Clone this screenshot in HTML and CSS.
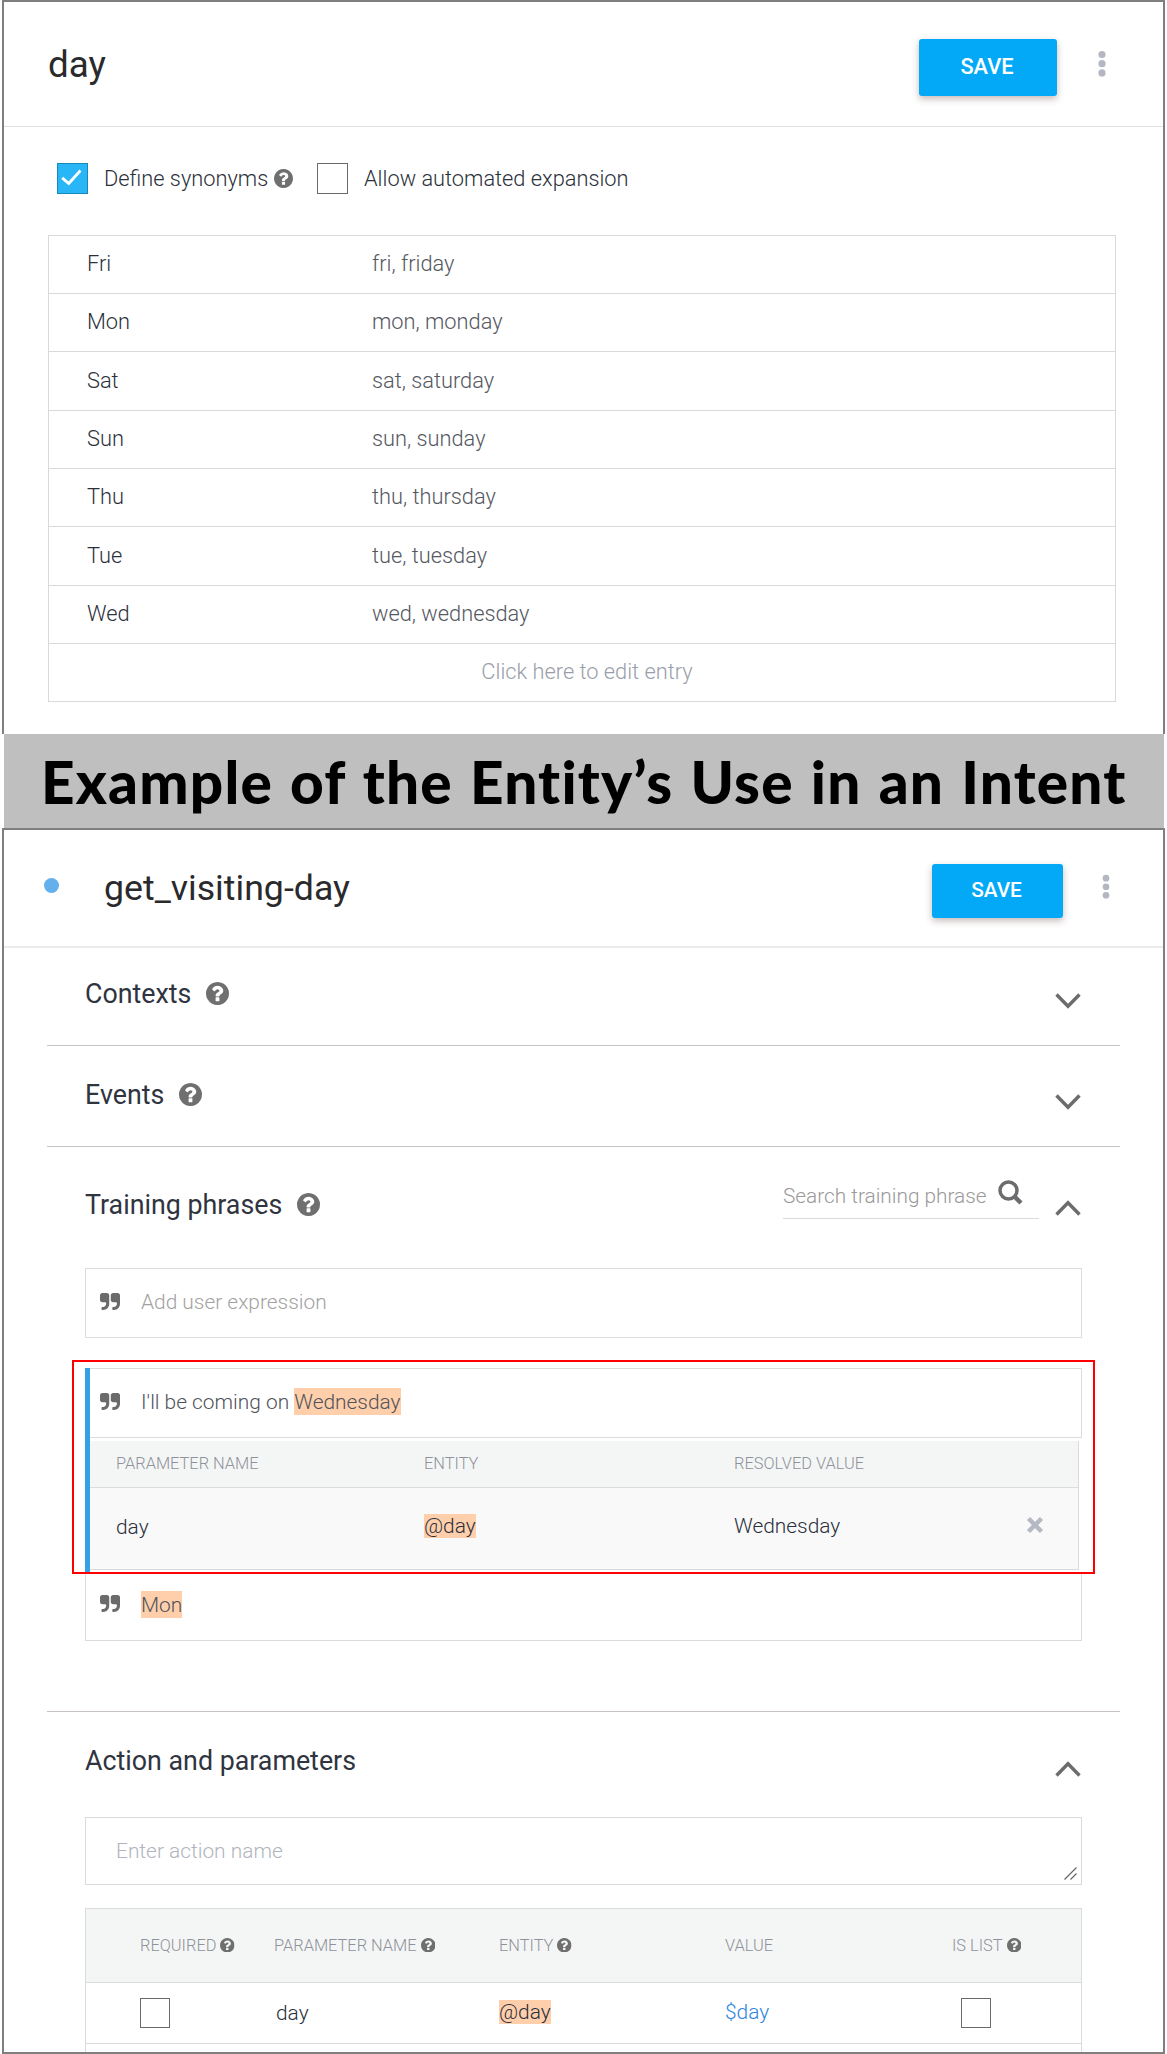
FILE: index.html
```html
<!DOCTYPE html>
<html lang="en">
<head>
<meta charset="utf-8">
<title>Entity and intent</title>
<link rel="stylesheet" href="styles.css">
</head>
<body>
<svg class="sprite" aria-hidden="true">
  <symbol id="help" viewBox="128 128 1536 1536"><path d="M1024 1376v-192q0-14-9-23t-23-9h-192q-14 0-23 9t-9 23v192q0 14 9 23t23 9h192q14 0 23-9t9-23zm256-672q0-88-55.500-163t-138.500-116-170-41q-243 0-371 213-15 24 8 42l132 100q7 6 19 6 16 0 25-12 53-68 86-92 34-24 86-24 48 0 85.500 26t37.500 59q0 38-20 61t-68 45q-63 28-115.500 86.500t-52.500 125.500v36q0 14 9 23t23 9h192q14 0 23-9t9-23q0-19 21.500-49.500t54.500-49.500q32-18 49-28.500t46-35 44.500-48 28-60.500 12.500-81zm384 192q0 209-103 385.500t-279.500 279.500-385.500 103-385.500-103-279.500-279.500-103-385.500 103-385.500 279.500-279.500 385.500-103 385.500 103 279.500 279.500 103 385.500z"/></symbol>
  <symbol id="quote" viewBox="64 128 1664 1408" preserveAspectRatio="none"><path d="M832 320v704q0 104-40.500 198.500t-109.500 163.500-163.500 109.500-198.500 40.500h-64q-26 0-45-19t-19-45v-128q0-26 19-45t45-19h64q106 0 181-75t75-181v-32q0-40-28-68t-68-28h-224q-80 0-136-56t-56-136v-384q0-80 56-136t136-56h384q80 0 136 56t56 136zm896 0v704q0 104-40.500 198.500t-109.500 163.500-163.500 109.500-198.500 40.500h-64q-26 0-45-19t-19-45v-128q0-26 19-45t45-19h64q106 0 181-75t75-181v-32q0-40-28-68t-68-28h-224q-80 0-136-56t-56-136v-384q0-80 56-136t136-56h384q80 0 136 56t56 136z"/></symbol>
  <symbol id="dots" viewBox="0 0 8 28"><circle cx="4" cy="4.500" r="3.600"/><circle cx="4" cy="13.700" r="3.600"/><circle cx="4" cy="22.900" r="3.600"/></symbol>
  <symbol id="chevron" viewBox="0 0 26 16"><path d="M1.500 1.500 13 13.300 24.500 1.500" fill="none" stroke="#6c6c6f" stroke-width="3.400"/></symbol>
</svg>

<section class="panel entity">
  <header class="entity-head">
    <h1 class="title">day</h1>
    <button class="save">SAVE</button>
    <svg class="dots"><use href="#dots"/></svg>
  </header>
  <div class="options">
    <span class="check checked"><svg viewBox="0 0 31 31"><path d="M4.500 14.800 11.500 20.800 24 7" fill="none" stroke="#fff" stroke-width="3"/></svg></span>
    <span class="option-label first">Define synonyms</span>
    <svg class="help help-md"><use href="#help"/></svg>
    <span class="check second"></span>
    <span class="option-label">Allow automated expansion</span>
  </div>
  <div class="entries">
    <div class="entry"><span>Fri</span><span class="syn">fri, friday</span></div>
    <div class="entry"><span>Mon</span><span class="syn">mon, monday</span></div>
    <div class="entry tall"><span>Sat</span><span class="syn">sat, saturday</span></div>
    <div class="entry"><span>Sun</span><span class="syn">sun, sunday</span></div>
    <div class="entry"><span>Thu</span><span class="syn">thu, thursday</span></div>
    <div class="entry tall"><span>Tue</span><span class="syn">tue, tuesday</span></div>
    <div class="entry"><span>Wed</span><span class="syn">wed, wednesday</span></div>
    <div class="entry-add">Click here to edit entry</div>
  </div>
</section>

<div class="banner"><span class="banner-text">Example of the Entity’s Use in an Intent</span></div>

<section class="panel intent">
  <header class="intent-head">
    <span class="status"></span>
    <h1 class="title small">get_visiting-day</h1>
    <button class="save small">SAVE</button>
    <svg class="dots small"><use href="#dots"/></svg>
  </header>

  <div class="section contexts">
    <h2>Contexts</h2><svg class="help help-lg"><use href="#help"/></svg>
    <svg class="chevron"><use href="#chevron"/></svg>
  </div>
  <div class="section events">
    <h2>Events</h2><svg class="help help-lg"><use href="#help"/></svg>
    <svg class="chevron"><use href="#chevron"/></svg>
  </div>

  <div class="section-block training">
    <div class="training-head">
      <h2>Training phrases</h2><svg class="help help-lg"><use href="#help"/></svg>
      <div class="search">
        <span class="search-text">Search training phrase</span>
        <svg class="search-icon" viewBox="0 0 25 25"><circle cx="10.500" cy="10.500" r="8.500"/><path d="M16.500 16.500 23 23"/></svg>
      </div>
      <svg class="chevron up"><use href="#chevron"/></svg>
    </div>
    <div class="phrase add"><svg class="quote"><use href="#quote"/></svg><span>Add user expression</span></div>
    <div class="phrase-group">
      <div class="highlight"></div>
      <div class="selected">
        <div class="phrase"><svg class="quote"><use href="#quote"/></svg><span>I'll be coming on <mark>Wednesday</mark></span></div>
        <div class="params">
          <div class="params-row params-head"><span>PARAMETER NAME</span><span>ENTITY</span><span>RESOLVED VALUE</span></div>
          <div class="params-row params-body">
            <span class="pname">day</span><span><mark class="tight">@day</mark></span><span>Wednesday</span>
            <svg class="remove" viewBox="0 0 18 18"><path d="M2.500 2.500 15.500 15.500M15.500 2.500 2.500 15.500"/></svg>
          </div>
        </div>
      </div>
      <div class="phrase last"><svg class="quote"><use href="#quote"/></svg><span><mark>Mon</mark></span></div>
    </div>
  </div>

  <div class="section-block action">
    <div class="action-head">
      <h2>Action and parameters</h2>
      <svg class="chevron up"><use href="#chevron"/></svg>
    </div>
    <div class="action-name"><span>Enter action name</span>
      <svg class="grip" viewBox="0 0 13 13"><path d="M.5 12.500 12.500.5M6.500 12.500 12.500 6.500"/></svg>
    </div>
    <div class="action-table">
      <div class="action-row action-cols">
        <span>REQUIRED<svg class="help help-sm"><use href="#help"/></svg></span>
        <span>PARAMETER NAME<svg class="help help-sm"><use href="#help"/></svg></span>
        <span>ENTITY<svg class="help help-sm"><use href="#help"/></svg></span>
        <span>VALUE</span>
        <span>IS LIST<svg class="help help-sm"><use href="#help"/></svg></span>
      </div>
      <div class="action-row action-values">
        <span><i class="check sm"></i></span>
        <span class="dayname">day</span>
        <span><mark class="tight">@day</mark></span>
        <span class="value">$day</span>
        <span><i class="check sm list"></i></span>
      </div>
    </div>
  </div>
</section>
</body>
</html>
```
FILE: styles.css
```css
* { box-sizing: border-box; }
body {
  margin: 0;
  width: 1167px;
  height: 2054px;
  overflow: hidden;
  background: #fff;
  font-family: Roboto, "Liberation Sans", sans-serif;
  font-weight: 300;
  font-size: 20.900px;
  color: #2b303b;
}
h1, h2 { margin: 0; font-weight: 400; }
svg { display: block; flex: none; }
span { white-space: nowrap; }
.sprite { position: absolute; width: 0; height: 0; }

.panel {
  width: 1163px;
  margin-left: 2px;
  border: 2px solid #7f7f7f;
  background: #fff;
  overflow: hidden;
}
.entity { height: 734px; border-bottom: 0; }
.intent { height: 1226px; }

.title { font-size: 36.800px; line-height: 44px; color: #2a2a2c; }
.title.small { font-size: 35.700px; padding-top: 2px; }
.save {
  width: 138px;
  height: 57px;
  margin: 0 0 0 auto;
  padding: 0 2px 2px 0;
  border: 0;
  border-radius: 3px;
  background: #03a9f7;
  box-shadow: 0 3px 7px rgba(80, 40, 40, .32);
  color: #fff;
  font: 500 21.800px Roboto, sans-serif;
}
.save.small { width: 131px; height: 54px; font-size: 20.800px; padding-bottom: 3px; }
.dots { width: 8px; height: 28px; fill: #b4b7c1; }
.dots.small { height: 26px; }

.entity-head {
  display: flex;
  align-items: flex-start;
  height: 125px;
  padding: 37px 57px 0 44px;
  border-bottom: 1.500px solid #e0e0e0;
}
.entity-head .title { padding-top: 4px; }
.entity-head .dots { margin: 11px 0 0 41px; }

.options {
  display: flex;
  align-items: center;
  height: 108px;
  padding: 0 0 5px 53px;
  font-size: 21.800px;
}
.check { width: 31px; height: 31px; border: 1.500px solid #6a6a6a; background: #fff; flex: none; }
.checked { background: #29b6f6; border-color: #1688bb; }
.checked svg { width: 29px; height: 29px; }
.option-label.first { width: 163px; margin-left: 16px; }
.help { fill: #6f6f6f; }
.help-md { width: 19px; height: 19px; margin-left: 7px; }
.second { margin: 0 16px 0 24px; }

.entries {
  width: 1068px;
  margin: 0 0 0 44px;
  border: 1.500px solid #d9d9d9;
  font-size: 21.800px;
}
.entry {
  display: grid;
  grid-template-columns: 285px 1fr;
  align-items: center;
  height: 58px;
  padding: 0 0 2px 38px;
  border-bottom: 1.500px solid #d9d9d9;
}
.entry.tall { height: 59px; padding-bottom: 1px; }
.syn { color: #55585f; }
.entry-add { height: 57px; padding-left: 10px; line-height: 56px; text-align: center; color: #999eaa; }

.banner {
  width: 1160px;
  height: 94px;
  margin-left: 4px;
  padding-left: 37px;
  background: #bfbfbf;
  color: #000;
  line-height: 94px;
}
.banner-text {
  font-family: Lato, "Open Sans", sans-serif;
  font-weight: 900;
  font-size: 58.500px;
  font-variant-ligatures: none;
  letter-spacing: 1.200px;
  word-spacing: 2px;
}

.intent-head {
  display: flex;
  align-items: flex-start;
  height: 118px;
  padding: 34px 53px 0 40px;
  border-bottom: 2px solid #ebebeb;
}
.status { width: 15px; height: 15px; margin: 14px 45px 0 0; border-radius: 50%; background: #64b0ec; }
.intent-head .dots { margin: 10px 0 0 39px; }

h2 { font-size: 26.800px; line-height: 32px; color: #30343f; }
.help-lg { width: 23px; height: 23px; }
.section {
  display: flex;
  align-items: flex-start;
  height: 98px;
  margin: 0 43px;
  padding: 30px 39px 0 38px;
  border-bottom: 1.500px solid #c8c2c2;
}
.events { height: 101px; padding-top: 33px; }
.section .help-lg { margin: 4px 0 0 15px; }
.chevron { width: 26px; height: 16px; margin: 15px 0 0 auto; }
.chevron.up { transform: scaleY(-1); }

.section-block { margin: 0 43px; padding: 0 38px; }
.training { height: 565px; border-bottom: 1.500px solid #c8c2c2; }
.training-head { display: flex; align-items: flex-start; height: 121px; padding-top: 42px; }
.training-head .help-lg { margin: 4px 0 0 15px; }
.search {
  display: flex;
  width: 256px;
  height: 47px;
  margin: -17px 0 0 auto;
  border-bottom: 1.500px solid #dadada;
}
.search-text { width: 204px; line-height: 49px; font-size: 20.800px; color: #999; }
.search-icon { width: 25px; height: 25px; margin: 8px 0 0 11px; fill: none; stroke: #6c6c6f; stroke-width: 3.500px; }
.search-icon path { stroke-width: 4.500px; }
.training-head .chevron { margin: 11px 1px 0 16px; }

.phrase {
  display: flex;
  align-items: center;
  width: 997px;
  height: 70px;
  padding: 0 0 2px 14px;
  border: 1.500px solid #dcdcdc;
  color: #50535a;
}
.quote { width: 20px; height: 17px; margin: 0 21px 2px 0; fill: #6b6b6b; }
.phrase.add { color: #a2a2a2; }
.phrase-group { position: relative; width: 997px; margin-top: 30px; }
.selected { border-left: 5px solid #35a0e4; height: 204px; }
.selected .phrase { width: 992px; padding-left: 10px; border-left: 0; }
.phrase.last { height: 69px; padding-bottom: 3px; border-top: 0; }
.highlight { position: absolute; left: -13px; top: -8px; width: 1023px; height: 214px; border: 2px solid #f00; z-index: 2; }
mark { background: #ffcfab; color: inherit; padding: 2px 0 1px; }
mark.tight { padding: 0; }

.params { width: 989px; margin-top: 3px; border: 1.500px solid #dadcdc; border-width: 0 1.500px 1.500px 0; background: #f9f9f9; }
.params-row { display: grid; grid-template-columns: 308px 310px 292px 1fr; padding-left: 26px; align-items: center; }
.params-head { height: 47px; padding-bottom: 1px; background: #f4f6f5; border-bottom: 1.500px solid #dadcdc; font-size: 16.400px; color: #8f929a; }
.params-body { height: 81px; padding-bottom: 5px; }
.pname { padding-top: 2px; }
.remove { width: 18px; height: 18px; margin-bottom: 2px; stroke: #b5b9c3; stroke-width: 4.500px; }

.action-head { display: flex; align-items: flex-start; height: 105px; padding-top: 33px; }
.action-head .chevron { margin-top: 16px; margin-right: 1px; }
.action-name {
  position: relative;
  width: 997px;
  height: 68px;
  padding-left: 30px;
  border: 1.500px solid #dadada;
  line-height: 66px;
  color: #b0b4be;
}
.grip { position: absolute; right: 4px; bottom: 4px; width: 13px; height: 13px; fill: none; stroke: #666; stroke-width: 1.200px; }
.action-table { width: 997px; height: 200px; margin-top: 23px; border: 1.500px solid #dadcdc; }
.action-row { display: grid; grid-template-columns: 134px 225px 226px 227px 1fr; align-items: center; padding-left: 54px; border-bottom: 1.500px solid #dadcdc; }
.action-row > span { display: flex; align-items: center; }
.action-cols { height: 74px; padding-bottom: 1px; background: #f4f6f5; font-size: 16.400px; color: #8f929a; }
.help-sm { width: 14.500px; height: 14.500px; margin-left: 4px; }
.action-values { height: 61px; padding-bottom: 1px; }
.action-values > span { padding-bottom: 2px; }
.action-values > .dayname { padding: 1px 0 0 2px; }
.check.sm { width: 30px; height: 30px; margin-top: 2px; }
.check.list { margin-left: 9px; }
.value { color: #2f86dc; }
```
